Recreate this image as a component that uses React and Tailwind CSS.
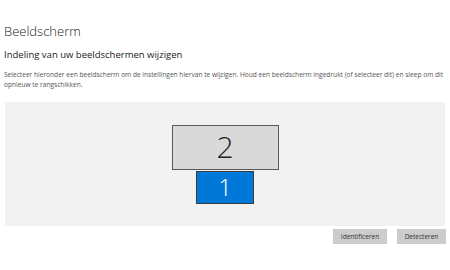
import React from 'react';

const App = () => {
  return (
    <div
      className="w-[450px] h-[270px] bg-white overflow-hidden"
      style={{ fontFamily: '"Open Sans", "Noto Sans", sans-serif' }}
    >
      <div className="pl-[4px] pt-[22px]">
        <h1 className="text-[13px] font-light text-[#222] leading-[18px]">Beeldscherm</h1>
        <h2 className="mt-[8px] text-[9.5px] text-[#222] leading-[14px]">
          Indeling van uw beeldschermen wijzigen
        </h2>
        <p className="mt-[8px] text-[6.6px] text-[#555] leading-[10px] pr-[4px]">
          Selecteer hieronder een beeldscherm om de instellingen hiervan te wijzigen. Houd een beeldscherm ingedrukt (of selecteer dit) en sleep om dit opnieuw te rangschikken.
        </p>
      </div>

      {/* monitor layout */}
      <div className="ml-[5px] mt-[12px] w-[440px] h-[124px] bg-[#f2f2f2] flex flex-col items-center justify-center">
        <div className="w-[107px] h-[45px] bg-[#d9d9d9] border border-[#5a5a5a] flex items-center justify-center">
          <span className="text-[30px] font-light text-[#222] leading-none">2</span>
        </div>
        <div className="mt-[1px] w-[58px] h-[33px] bg-[#0078d7] border border-[#3c3c3c] flex items-center justify-center">
          <span className="text-[24px] font-light text-white leading-none">1</span>
        </div>
      </div>

      <div className="flex justify-end gap-[10px] pr-[4px] mt-[3px]">
        <button className="w-[54px] h-[15px] bg-[#cccccc] text-[6.5px] text-[#333] flex items-center justify-center">
          Identificeren
        </button>
        <button className="w-[49px] h-[15px] bg-[#cccccc] text-[6.5px] text-[#333] flex items-center justify-center">
          Detecteren
        </button>
      </div>
    </div>
  );
};

export default App;
